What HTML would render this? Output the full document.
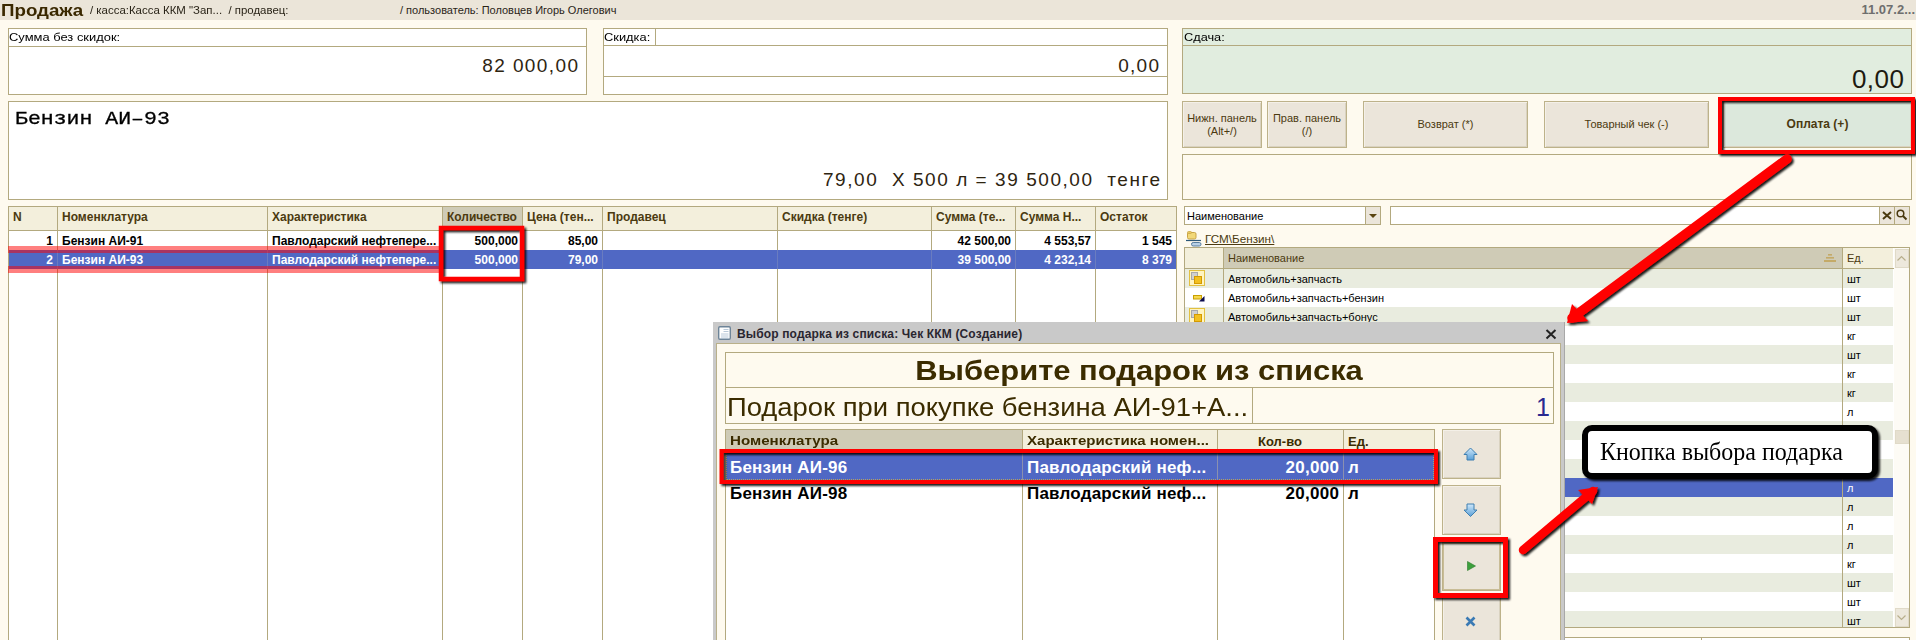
<!DOCTYPE html><html><head><meta charset="utf-8"><style>
*{margin:0;padding:0}
html,body{width:1916px;height:640px;overflow:hidden;background:#fefaef;position:relative}
.a{position:absolute;box-sizing:border-box}
.t{white-space:pre;box-sizing:content-box}
.btn{border:1px solid #bdb28a;box-shadow:inset 1px 1px 0 #f4f0e8,inset -1px -1px 0 #d9d2c0;display:flex;align-items:center;justify-content:center}
.bl{font-family:"Liberation Sans",sans-serif;text-align:center;line-height:13px}
</style></head><body><div class="a" style="left:0px;top:0px;width:1916px;height:20px;background:#ebe5d9;"></div>
<div class="a t" style="top:-0.05px;font-family:'Liberation Sans', sans-serif;font-size:16px;font-weight:700;color:#3a2800;line-height:21px;left:1px;transform:scale(1.17,1);transform-origin:0 16.05px;">Продажа</div>
<div class="a t" style="top:3.19px;font-family:'Liberation Sans', sans-serif;font-size:11px;font-weight:400;color:#2a2418;line-height:14px;left:90px;transform:scale(1.04,1);transform-origin:0 10.81px;">/ касса:Касса ККМ "Зап... &nbsp;/ продавец:</div>
<div class="a t" style="top:3.19px;font-family:'Liberation Sans', sans-serif;font-size:11px;font-weight:400;color:#2a2418;line-height:14px;left:400px;">/ пользователь: Половцев Игорь Олегович</div>
<div class="a t" style="top:0.99px;font-family:'Liberation Sans', sans-serif;font-size:13px;font-weight:700;color:#6e6e6e;line-height:17px;right:1px;">11.07.2...</div>
<div class="a" style="left:8px;top:28px;width:579px;height:67px;border:1px solid #b3a97f;background:#fff;"></div>
<div class="a" style="left:8px;top:46px;width:579px;height:1px;background:#b3a97f;"></div>
<div class="a t" style="top:30.19px;font-family:'Liberation Sans', sans-serif;font-size:11px;font-weight:400;color:#000;line-height:14px;left:9px;transform:scale(1.175,1);transform-origin:0 10.81px;">Сумма без скидок:</div>
<div class="a t" style="top:52.91px;font-family:'Liberation Sans', sans-serif;font-size:19px;font-weight:400;color:#2e2410;line-height:25px;letter-spacing:1.4px;right:1336.6px;">82 000,00</div>
<div class="a" style="left:603px;top:28px;width:565px;height:67px;border:1px solid #b3a97f;background:#fff;"></div>
<div class="a" style="left:603px;top:45px;width:565px;height:1px;background:#b3a97f;"></div>
<div class="a" style="left:603px;top:76px;width:565px;height:1px;background:#b3a97f;"></div>
<div class="a" style="left:655px;top:28px;width:1px;height:18px;background:#b3a97f;"></div>
<div class="a t" style="top:30.19px;font-family:'Liberation Sans', sans-serif;font-size:11px;font-weight:400;color:#000;line-height:14px;left:603.5px;transform:scale(1.17,1);transform-origin:0 10.81px;">Скидка:</div>
<div class="a t" style="top:52.91px;font-family:'Liberation Sans', sans-serif;font-size:19px;font-weight:400;color:#2e2410;line-height:25px;letter-spacing:1.3px;right:755.7px;">0,00</div>
<div class="a" style="left:1182px;top:28px;width:730px;height:66px;border:1px solid #b3a97f;background:#e1eddf;"></div>
<div class="a" style="left:1182px;top:45px;width:730px;height:1px;background:#b3a97f;"></div>
<div class="a t" style="top:30.19px;font-family:'Liberation Sans', sans-serif;font-size:11px;font-weight:400;color:#000;line-height:14px;left:1184px;transform:scale(1.16,1);transform-origin:0 10.81px;">Сдача:</div>
<div class="a t" style="top:61.99px;font-family:'Liberation Sans', sans-serif;font-size:26px;font-weight:400;color:#1e1a10;line-height:34px;letter-spacing:0.5px;right:11.5px;">0,00</div>
<div class="a" style="left:8px;top:101px;width:1160px;height:99px;border:1px solid #b3a97f;background:#fff;"></div>
<div class="a t" style="top:104.28px;font-family:'Liberation Mono', monospace;font-size:21.5px;font-weight:400;color:#000;line-height:28px;left:15px;transform:scale(1,0.85);transform-origin:0 19.72px;-webkit-text-stroke:0.35px #000;">Бензин АИ–93</div>
<div class="a t" style="top:167.41px;font-family:'Liberation Sans', sans-serif;font-size:19px;font-weight:400;color:#2e2410;line-height:25px;letter-spacing:1.55px;right:754.4000000000001px;">79,00 &nbsp;X 500 л = 39 500,00 &nbsp;тенге</div>
<div class="a btn" style="left:1182px;top:101px;width:80px;height:47px;background:#ebe5da;"><div class="bl" style="font-weight:400;font-size:11px;color:#4b3a10">Нижн. панель<br>(Alt+/)</div></div>
<div class="a btn" style="left:1267px;top:101px;width:80px;height:47px;background:#ebe5da;"><div class="bl" style="font-weight:400;font-size:11px;color:#4b3a10">Прав. панель<br>(/)</div></div>
<div class="a btn" style="left:1363px;top:101px;width:165px;height:47px;background:#ebe5da;"><div class="bl" style="font-weight:400;font-size:11px;color:#4b3a10">Возврат (*)</div></div>
<div class="a btn" style="left:1544px;top:101px;width:165px;height:47px;background:#ebe5da;"><div class="bl" style="font-weight:400;font-size:11px;color:#4b3a10">Товарный чек (-)</div></div>
<div class="a btn" style="left:1723px;top:101px;width:189px;height:47px;background:#dce8dc;"><div class="bl" style="font-weight:700;font-size:12px;color:#4b3a10">Оплата (+)</div></div>
<div class="a" style="left:1182px;top:154px;width:730px;height:46px;border:1px solid #b3a97f;background:#fefaef;"></div>
<div class="a" style="left:8px;top:206px;width:1169px;height:455px;border:1px solid #b3a97f;background:#fff;"></div>
<div class="a" style="left:9px;top:207px;width:1167px;height:24px;background:#f3efdc;"></div>
<div class="a" style="left:443px;top:207px;width:79px;height:23px;background:#cfcbb6;"></div>
<div class="a" style="left:8px;top:230px;width:1169px;height:1px;background:#b3a97f;"></div>
<div class="a" style="left:57px;top:206px;width:1px;height:435px;background:#b3a97f;"></div>
<div class="a" style="left:267px;top:206px;width:1px;height:435px;background:#b3a97f;"></div>
<div class="a" style="left:442px;top:206px;width:1px;height:435px;background:#b3a97f;"></div>
<div class="a" style="left:522px;top:206px;width:1px;height:435px;background:#b3a97f;"></div>
<div class="a" style="left:602px;top:206px;width:1px;height:435px;background:#b3a97f;"></div>
<div class="a" style="left:777px;top:206px;width:1px;height:435px;background:#b3a97f;"></div>
<div class="a" style="left:931px;top:206px;width:1px;height:435px;background:#b3a97f;"></div>
<div class="a" style="left:1015px;top:206px;width:1px;height:435px;background:#b3a97f;"></div>
<div class="a" style="left:1095px;top:206px;width:1px;height:435px;background:#b3a97f;"></div>
<div class="a t" style="top:208.84px;font-family:'Liberation Sans', sans-serif;font-size:12px;font-weight:700;color:#4b3a10;line-height:16px;left:13px;">N</div>
<div class="a t" style="top:208.84px;font-family:'Liberation Sans', sans-serif;font-size:12px;font-weight:700;color:#4b3a10;line-height:16px;left:62px;">Номенклатура</div>
<div class="a t" style="top:208.84px;font-family:'Liberation Sans', sans-serif;font-size:12px;font-weight:700;color:#4b3a10;line-height:16px;left:272px;">Характеристика</div>
<div class="a t" style="top:208.84px;font-family:'Liberation Sans', sans-serif;font-size:12px;font-weight:700;color:#4b3a10;line-height:16px;left:447px;">Количество</div>
<div class="a t" style="top:208.84px;font-family:'Liberation Sans', sans-serif;font-size:12px;font-weight:700;color:#4b3a10;line-height:16px;left:527px;">Цена (тен...</div>
<div class="a t" style="top:208.84px;font-family:'Liberation Sans', sans-serif;font-size:12px;font-weight:700;color:#4b3a10;line-height:16px;left:607px;">Продавец</div>
<div class="a t" style="top:208.84px;font-family:'Liberation Sans', sans-serif;font-size:12px;font-weight:700;color:#4b3a10;line-height:16px;left:782px;">Скидка (тенге)</div>
<div class="a t" style="top:208.84px;font-family:'Liberation Sans', sans-serif;font-size:12px;font-weight:700;color:#4b3a10;line-height:16px;left:936px;">Сумма (те...</div>
<div class="a t" style="top:208.84px;font-family:'Liberation Sans', sans-serif;font-size:12px;font-weight:700;color:#4b3a10;line-height:16px;left:1020px;">Сумма Н...</div>
<div class="a t" style="top:208.84px;font-family:'Liberation Sans', sans-serif;font-size:12px;font-weight:700;color:#4b3a10;line-height:16px;left:1100px;">Остаток</div>
<div class="a" style="left:9px;top:250px;width:1167px;height:19px;background:#5068c4;"></div>
<div class="a" style="left:57px;top:250px;width:1px;height:19px;background:#6a7cc0;"></div>
<div class="a" style="left:267px;top:250px;width:1px;height:19px;background:#6a7cc0;"></div>
<div class="a" style="left:442px;top:250px;width:1px;height:19px;background:#6a7cc0;"></div>
<div class="a" style="left:522px;top:250px;width:1px;height:19px;background:#6a7cc0;"></div>
<div class="a" style="left:602px;top:250px;width:1px;height:19px;background:#6a7cc0;"></div>
<div class="a" style="left:777px;top:250px;width:1px;height:19px;background:#6a7cc0;"></div>
<div class="a" style="left:931px;top:250px;width:1px;height:19px;background:#6a7cc0;"></div>
<div class="a" style="left:1015px;top:250px;width:1px;height:19px;background:#6a7cc0;"></div>
<div class="a" style="left:1095px;top:250px;width:1px;height:19px;background:#6a7cc0;"></div>
<div class="a t" style="top:232.84px;font-family:'Liberation Sans', sans-serif;font-size:12px;font-weight:700;color:#000;line-height:16px;right:1863px;">1</div>
<div class="a t" style="top:232.84px;font-family:'Liberation Sans', sans-serif;font-size:12px;font-weight:700;color:#000;line-height:16px;left:62px;">Бензин АИ-91</div>
<div class="a t" style="top:232.84px;font-family:'Liberation Sans', sans-serif;font-size:12px;font-weight:700;color:#000;line-height:16px;left:272px;">Павлодарский нефтепере...</div>
<div class="a t" style="top:232.84px;font-family:'Liberation Sans', sans-serif;font-size:12px;font-weight:700;color:#000;line-height:16px;right:1398px;">500,000</div>
<div class="a t" style="top:232.84px;font-family:'Liberation Sans', sans-serif;font-size:12px;font-weight:700;color:#000;line-height:16px;right:1318px;">85,00</div>
<div class="a t" style="top:232.84px;font-family:'Liberation Sans', sans-serif;font-size:12px;font-weight:700;color:#000;line-height:16px;right:905px;">42 500,00</div>
<div class="a t" style="top:232.84px;font-family:'Liberation Sans', sans-serif;font-size:12px;font-weight:700;color:#000;line-height:16px;right:825px;">4 553,57</div>
<div class="a t" style="top:232.84px;font-family:'Liberation Sans', sans-serif;font-size:12px;font-weight:700;color:#000;line-height:16px;right:744px;">1 545</div>
<div class="a t" style="top:251.84px;font-family:'Liberation Sans', sans-serif;font-size:12px;font-weight:700;color:#fff;line-height:16px;right:1863px;">2</div>
<div class="a t" style="top:251.84px;font-family:'Liberation Sans', sans-serif;font-size:12px;font-weight:700;color:#fff;line-height:16px;left:62px;">Бензин АИ-93</div>
<div class="a t" style="top:251.84px;font-family:'Liberation Sans', sans-serif;font-size:12px;font-weight:700;color:#fff;line-height:16px;left:272px;">Павлодарский нефтепере...</div>
<div class="a t" style="top:251.84px;font-family:'Liberation Sans', sans-serif;font-size:12px;font-weight:700;color:#fff;line-height:16px;right:1398px;">500,000</div>
<div class="a t" style="top:251.84px;font-family:'Liberation Sans', sans-serif;font-size:12px;font-weight:700;color:#fff;line-height:16px;right:1318px;">79,00</div>
<div class="a t" style="top:251.84px;font-family:'Liberation Sans', sans-serif;font-size:12px;font-weight:700;color:#fff;line-height:16px;right:905px;">39 500,00</div>
<div class="a t" style="top:251.84px;font-family:'Liberation Sans', sans-serif;font-size:12px;font-weight:700;color:#fff;line-height:16px;right:825px;">4 232,14</div>
<div class="a t" style="top:251.84px;font-family:'Liberation Sans', sans-serif;font-size:12px;font-weight:700;color:#fff;line-height:16px;right:744px;">8 379</div>
<div class="a" style="left:1184px;top:206px;width:197px;height:19px;border:1px solid #b3a97f;background:#fff;"></div>
<div class="a" style="left:1366px;top:207px;width:14px;height:17px;background:#ebe5da;"></div>
<div class="a" style="left:1365px;top:206px;width:1px;height:19px;background:#b3a97f;"></div>
<div class="a t" style="top:209.19px;font-family:'Liberation Sans', sans-serif;font-size:11px;font-weight:400;color:#000;line-height:14px;left:1187px;">Наименование</div>
<div class="a" style="left:1369px;top:214px;width:0;height:0;border-left:4px solid transparent;border-right:4px solid transparent;border-top:4.5px solid #5a4410"></div>
<div class="a" style="left:1390px;top:206px;width:520px;height:19px;border:1px solid #b3a97f;background:#fff;"></div>
<div class="a" style="left:1880px;top:207px;width:29px;height:17px;background:#ebe5da;"></div>
<div class="a" style="left:1879px;top:206px;width:1px;height:19px;background:#b3a97f;"></div>
<div class="a" style="left:1894px;top:206px;width:1px;height:19px;background:#b3a97f;"></div>
<svg class="a" style="left:0;top:0" width="1916" height="640"><path d="M1883,212 L1891,219 M1891,212 L1883,219" stroke="#4a3a10" stroke-width="2"/></svg>
<div class="a t" style="top:231.44px;font-family:'Liberation Sans', sans-serif;font-size:11.7px;font-weight:400;color:#4b3a10;line-height:15px;left:1205px;"><u>ГСМ\Бензин\</u></div>
<div class="a" style="left:1184px;top:247px;width:726px;height:381px;border:1px solid #b3a97f;background:#fff;"></div>
<div class="a" style="left:1185px;top:248px;width:38px;height:20px;background:#f3efdc;"></div>
<div class="a" style="left:1224px;top:248px;width:618px;height:20px;background:#cfcbb6;"></div>
<div class="a" style="left:1843px;top:248px;width:50px;height:20px;background:#f3efdc;"></div>
<div class="a" style="left:1184px;top:268px;width:710px;height:1px;background:#b3a97f;"></div>
<div class="a" style="left:1223px;top:247px;width:1px;height:381px;background:#b3a97f;"></div>
<div class="a" style="left:1842px;top:247px;width:1px;height:381px;background:#b3a97f;"></div>
<div class="a t" style="top:251.19px;font-family:'Liberation Sans', sans-serif;font-size:11px;font-weight:400;color:#4b3a10;line-height:14px;left:1228px;">Наименование</div>
<div class="a t" style="top:251.19px;font-family:'Liberation Sans', sans-serif;font-size:11px;font-weight:400;color:#4b3a10;line-height:14px;left:1847px;">Ед.</div>
<div class="a" style="left:1185px;top:269px;width:38px;height:19px;background:#e9ecdf;"></div>
<div class="a" style="left:1224px;top:269px;width:618px;height:19px;background:#e9ecdf;"></div>
<div class="a" style="left:1843px;top:269px;width:50px;height:19px;background:#e9ecdf;"></div>
<div class="a t" style="top:272.19px;font-family:'Liberation Sans', sans-serif;font-size:11px;font-weight:400;color:#000;line-height:14px;left:1847px;">шт</div>
<div class="a t" style="top:272.19px;font-family:'Liberation Sans', sans-serif;font-size:11px;font-weight:400;color:#000;line-height:14px;left:1228px;">Автомобиль+запчасть</div>
<div class="a" style="left:1185px;top:288px;width:38px;height:19px;background:#fff;"></div>
<div class="a" style="left:1224px;top:288px;width:618px;height:19px;background:#fff;"></div>
<div class="a" style="left:1843px;top:288px;width:50px;height:19px;background:#fff;"></div>
<div class="a t" style="top:291.19px;font-family:'Liberation Sans', sans-serif;font-size:11px;font-weight:400;color:#000;line-height:14px;left:1847px;">шт</div>
<div class="a t" style="top:291.19px;font-family:'Liberation Sans', sans-serif;font-size:11px;font-weight:400;color:#000;line-height:14px;left:1228px;">Автомобиль+запчасть+бензин</div>
<div class="a" style="left:1185px;top:307px;width:38px;height:19px;background:#e9ecdf;"></div>
<div class="a" style="left:1224px;top:307px;width:618px;height:19px;background:#e9ecdf;"></div>
<div class="a" style="left:1843px;top:307px;width:50px;height:19px;background:#e9ecdf;"></div>
<div class="a t" style="top:310.19px;font-family:'Liberation Sans', sans-serif;font-size:11px;font-weight:400;color:#000;line-height:14px;left:1847px;">шт</div>
<div class="a t" style="top:310.19px;font-family:'Liberation Sans', sans-serif;font-size:11px;font-weight:400;color:#000;line-height:14px;left:1228px;">Автомобиль+запчасть+бонус</div>
<div class="a" style="left:1185px;top:326px;width:38px;height:19px;background:#fff;"></div>
<div class="a" style="left:1224px;top:326px;width:618px;height:19px;background:#fff;"></div>
<div class="a" style="left:1843px;top:326px;width:50px;height:19px;background:#fff;"></div>
<div class="a t" style="top:329.19px;font-family:'Liberation Sans', sans-serif;font-size:11px;font-weight:400;color:#000;line-height:14px;left:1847px;">кг</div>
<div class="a" style="left:1185px;top:345px;width:38px;height:19px;background:#e9ecdf;"></div>
<div class="a" style="left:1224px;top:345px;width:618px;height:19px;background:#e9ecdf;"></div>
<div class="a" style="left:1843px;top:345px;width:50px;height:19px;background:#e9ecdf;"></div>
<div class="a t" style="top:348.19px;font-family:'Liberation Sans', sans-serif;font-size:11px;font-weight:400;color:#000;line-height:14px;left:1847px;">шт</div>
<div class="a" style="left:1185px;top:364px;width:38px;height:19px;background:#fff;"></div>
<div class="a" style="left:1224px;top:364px;width:618px;height:19px;background:#fff;"></div>
<div class="a" style="left:1843px;top:364px;width:50px;height:19px;background:#fff;"></div>
<div class="a t" style="top:367.19px;font-family:'Liberation Sans', sans-serif;font-size:11px;font-weight:400;color:#000;line-height:14px;left:1847px;">кг</div>
<div class="a" style="left:1185px;top:383px;width:38px;height:19px;background:#e9ecdf;"></div>
<div class="a" style="left:1224px;top:383px;width:618px;height:19px;background:#e9ecdf;"></div>
<div class="a" style="left:1843px;top:383px;width:50px;height:19px;background:#e9ecdf;"></div>
<div class="a t" style="top:386.19px;font-family:'Liberation Sans', sans-serif;font-size:11px;font-weight:400;color:#000;line-height:14px;left:1847px;">кг</div>
<div class="a" style="left:1185px;top:402px;width:38px;height:19px;background:#fff;"></div>
<div class="a" style="left:1224px;top:402px;width:618px;height:19px;background:#fff;"></div>
<div class="a" style="left:1843px;top:402px;width:50px;height:19px;background:#fff;"></div>
<div class="a t" style="top:405.19px;font-family:'Liberation Sans', sans-serif;font-size:11px;font-weight:400;color:#000;line-height:14px;left:1847px;">л</div>
<div class="a" style="left:1185px;top:421px;width:38px;height:19px;background:#e9ecdf;"></div>
<div class="a" style="left:1224px;top:421px;width:618px;height:19px;background:#e9ecdf;"></div>
<div class="a" style="left:1843px;top:421px;width:50px;height:19px;background:#e9ecdf;"></div>
<div class="a t" style="top:424.19px;font-family:'Liberation Sans', sans-serif;font-size:11px;font-weight:400;color:#000;line-height:14px;left:1847px;">л</div>
<div class="a" style="left:1185px;top:440px;width:38px;height:19px;background:#fff;"></div>
<div class="a" style="left:1224px;top:440px;width:618px;height:19px;background:#fff;"></div>
<div class="a" style="left:1843px;top:440px;width:50px;height:19px;background:#fff;"></div>
<div class="a t" style="top:443.19px;font-family:'Liberation Sans', sans-serif;font-size:11px;font-weight:400;color:#000;line-height:14px;left:1847px;">л</div>
<div class="a" style="left:1185px;top:459px;width:38px;height:19px;background:#e9ecdf;"></div>
<div class="a" style="left:1224px;top:459px;width:618px;height:19px;background:#e9ecdf;"></div>
<div class="a" style="left:1843px;top:459px;width:50px;height:19px;background:#e9ecdf;"></div>
<div class="a t" style="top:462.19px;font-family:'Liberation Sans', sans-serif;font-size:11px;font-weight:400;color:#000;line-height:14px;left:1847px;">л</div>
<div class="a" style="left:1185px;top:478px;width:38px;height:19px;background:#5068c4;"></div>
<div class="a" style="left:1224px;top:478px;width:618px;height:19px;background:#5068c4;"></div>
<div class="a" style="left:1843px;top:478px;width:50px;height:19px;background:#5068c4;"></div>
<div class="a t" style="top:481.19px;font-family:'Liberation Sans', sans-serif;font-size:11px;font-weight:400;color:#fff;line-height:14px;left:1847px;">л</div>
<div class="a" style="left:1185px;top:497px;width:38px;height:19px;background:#e9ecdf;"></div>
<div class="a" style="left:1224px;top:497px;width:618px;height:19px;background:#e9ecdf;"></div>
<div class="a" style="left:1843px;top:497px;width:50px;height:19px;background:#e9ecdf;"></div>
<div class="a t" style="top:500.19px;font-family:'Liberation Sans', sans-serif;font-size:11px;font-weight:400;color:#000;line-height:14px;left:1847px;">л</div>
<div class="a" style="left:1185px;top:516px;width:38px;height:19px;background:#fff;"></div>
<div class="a" style="left:1224px;top:516px;width:618px;height:19px;background:#fff;"></div>
<div class="a" style="left:1843px;top:516px;width:50px;height:19px;background:#fff;"></div>
<div class="a t" style="top:519.19px;font-family:'Liberation Sans', sans-serif;font-size:11px;font-weight:400;color:#000;line-height:14px;left:1847px;">л</div>
<div class="a" style="left:1185px;top:535px;width:38px;height:19px;background:#e9ecdf;"></div>
<div class="a" style="left:1224px;top:535px;width:618px;height:19px;background:#e9ecdf;"></div>
<div class="a" style="left:1843px;top:535px;width:50px;height:19px;background:#e9ecdf;"></div>
<div class="a t" style="top:538.19px;font-family:'Liberation Sans', sans-serif;font-size:11px;font-weight:400;color:#000;line-height:14px;left:1847px;">л</div>
<div class="a" style="left:1185px;top:554px;width:38px;height:19px;background:#fff;"></div>
<div class="a" style="left:1224px;top:554px;width:618px;height:19px;background:#fff;"></div>
<div class="a" style="left:1843px;top:554px;width:50px;height:19px;background:#fff;"></div>
<div class="a t" style="top:557.19px;font-family:'Liberation Sans', sans-serif;font-size:11px;font-weight:400;color:#000;line-height:14px;left:1847px;">кг</div>
<div class="a" style="left:1185px;top:573px;width:38px;height:19px;background:#e9ecdf;"></div>
<div class="a" style="left:1224px;top:573px;width:618px;height:19px;background:#e9ecdf;"></div>
<div class="a" style="left:1843px;top:573px;width:50px;height:19px;background:#e9ecdf;"></div>
<div class="a t" style="top:576.19px;font-family:'Liberation Sans', sans-serif;font-size:11px;font-weight:400;color:#000;line-height:14px;left:1847px;">шт</div>
<div class="a" style="left:1185px;top:592px;width:38px;height:19px;background:#fff;"></div>
<div class="a" style="left:1224px;top:592px;width:618px;height:19px;background:#fff;"></div>
<div class="a" style="left:1843px;top:592px;width:50px;height:19px;background:#fff;"></div>
<div class="a t" style="top:595.19px;font-family:'Liberation Sans', sans-serif;font-size:11px;font-weight:400;color:#000;line-height:14px;left:1847px;">шт</div>
<div class="a" style="left:1185px;top:611px;width:38px;height:16px;background:#e9ecdf;"></div>
<div class="a" style="left:1224px;top:611px;width:618px;height:16px;background:#e9ecdf;"></div>
<div class="a" style="left:1843px;top:611px;width:50px;height:16px;background:#e9ecdf;"></div>
<div class="a t" style="top:614.19px;font-family:'Liberation Sans', sans-serif;font-size:11px;font-weight:400;color:#000;line-height:14px;left:1847px;">шт</div>
<div class="a" style="left:1894px;top:248px;width:15px;height:379px;background:#fdfbf5;"></div>
<div class="a" style="left:1895px;top:249px;width:14px;height:19px;border:1px solid #e0dac8;background:#ede8dc;"></div>
<div class="a" style="left:1895px;top:430px;width:14px;height:14px;border:1px solid #e0dac8;background:#e6e0d0;"></div>
<div class="a" style="left:1895px;top:608px;width:14px;height:19px;border:1px solid #e0dac8;background:#ede8dc;"></div>
<div class="a" style="left:1184px;top:637px;width:726px;height:24px;border:1px solid #b3a97f;background:#fff;"></div>
<div class="a" style="left:1701px;top:637px;width:1px;height:4px;background:#b3a97f;"></div>
<svg class="a" style="left:0;top:0" width="1916" height="640">
<rect x="1187.5" y="232.5" width="8.5" height="6.5" rx="1.5" fill="#f2d878" stroke="#c9a446"/>
<rect x="1187.5" y="231.5" width="4" height="2" rx="1" fill="#e8c860" stroke="#c9a446" stroke-width="0.8"/>
<line x1="1186" y1="240.5" x2="1201" y2="240.5" stroke="#2d5878" stroke-width="1.2"/>
<rect x="1191.5" y="242.5" width="9.5" height="3.5" rx="1.7" fill="#b8d0e6" stroke="#587c9c"/>
<rect x="1189.5" y="270.5" width="15" height="15" fill="#fff4c0" stroke="#e2c040"/>
<rect x="1191.5" y="272.5" width="6" height="7" fill="#d0d0d0" stroke="#a8a8a8"/>
<rect x="1194.5" y="276.5" width="7" height="7" fill="#f2c020" stroke="#d49a00"/>
<rect x="1193.5" y="295.5" width="8" height="3.5" fill="#f6d850" stroke="#c8a000"/>
<polygon points="1204.5,296 1204.5,301.5 1199,301.5" fill="#0c0c50"/>
<rect x="1189.5" y="308.5" width="15" height="15" fill="#fff4c0" stroke="#e2c040"/>
<rect x="1191.5" y="310.5" width="6" height="7" fill="#d0d0d0" stroke="#a8a8a8"/>
<rect x="1194.5" y="314.5" width="7" height="7" fill="#f2c020" stroke="#d49a00"/>
<rect x="1828" y="254" width="4" height="1.6" fill="#c4aa68"/>
<rect x="1826" y="257" width="8" height="1.6" fill="#c4aa68"/>
<rect x="1824" y="260" width="12" height="2" fill="#c4aa68"/>
<circle cx="1900.5" cy="213.5" r="3.3" fill="none" stroke="#4a3a10" stroke-width="1.5"/>
<line x1="1903" y1="216" x2="1906.5" y2="219.5" stroke="#4a3a10" stroke-width="2"/>
<polyline points="1897.5,260.5 1901.5,256.5 1905.5,260.5" fill="none" stroke="#b8ae8c" stroke-width="1.2"/>
<polyline points="1897.5,615.5 1901.5,619.5 1905.5,615.5" fill="none" stroke="#b8ae8c" stroke-width="1.2"/>
</svg>
<div class="a" style="left:713px;top:322px;width:852px;height:318px;background:#c9c9c9;"></div>
<div class="a" style="left:1564px;top:322px;width:1px;height:318px;background:#a8a8a8;"></div>
<div class="a" style="left:716px;top:343px;width:845px;height:297px;background:#fefaef;"></div>
<div class="a" style="left:716px;top:343px;width:845px;height:1px;background:#b9b08a;"></div>
<div class="a" style="left:1560px;top:343px;width:1px;height:297px;background:#b9b08a;"></div>
<div class="a" style="left:716px;top:343px;width:1px;height:298px;background:#b9b08a;"></div>
<div class="a t" style="top:325.84px;font-family:'Liberation Sans', sans-serif;font-size:12px;font-weight:700;color:#2a2630;line-height:16px;letter-spacing:0.15px;left:737px;">Выбор подарка из списка: Чек ККМ (Создание)</div>
<svg class="a" style="left:0;top:0" width="1916" height="640"><rect x="718.7" y="326.7" width="11.6" height="12.6" rx="1.2" fill="#fff" stroke="#6d8498" stroke-width="1.4"/>
<path d="M723.5,329.5 h5 M723.5,331.5 h5 M721,334 h7.5 M721,336 h7.5 M721,338 h7.5" stroke="#a8bcd0" stroke-width="0.8"/></svg>
<svg class="a" style="left:0;top:0" width="1916" height="640"><path d="M1546.5,330 L1555.5,338.5 M1555.5,330 L1546.5,338.5" stroke="#222" stroke-width="2"/></svg>
<div class="a" style="left:725px;top:352px;width:829px;height:72px;border:1px solid #b3a97f;background:#fefaef;"></div>
<div class="a" style="left:725px;top:387px;width:829px;height:1px;background:#b3a97f;"></div>
<div class="a" style="left:1252px;top:387px;width:1px;height:37px;background:#b3a97f;"></div>
<div class="a t" style="top:353.29px;font-family:'Liberation Sans', sans-serif;font-size:28px;font-weight:700;color:#3b2c00;line-height:36px;left:139px;width:2000px;text-align:center;transform:scale(1.105,1);transform-origin:50% 27.71px;">Выберите подарок из списка</div>
<div class="a t" style="top:390.66px;font-family:'Liberation Sans', sans-serif;font-size:25.5px;font-weight:400;color:#3b2c00;line-height:33px;left:727px;transform:scale(1.075,1);transform-origin:0 25.34px;">Подарок при покупке бензина АИ-91+А...</div>
<div class="a t" style="top:391.33px;font-family:'Liberation Sans', sans-serif;font-size:25px;font-weight:400;color:#2a2a90;line-height:32px;right:366px;">1</div>
<div class="a" style="left:725px;top:429px;width:710px;height:232px;border:1px solid #b3a97f;background:#fff;"></div>
<div class="a" style="left:726px;top:430px;width:296px;height:21px;background:#cfcbb6;"></div>
<div class="a" style="left:1023px;top:430px;width:411px;height:21px;background:#f3efdc;"></div>
<div class="a" style="left:725px;top:451px;width:710px;height:1px;background:#b3a97f;"></div>
<div class="a" style="left:1022px;top:429px;width:1px;height:212px;background:#b3a97f;"></div>
<div class="a" style="left:1217px;top:429px;width:1px;height:212px;background:#b3a97f;"></div>
<div class="a" style="left:1343px;top:429px;width:1px;height:212px;background:#b3a97f;"></div>
<div class="a t" style="top:432.32px;font-family:'Liberation Sans', sans-serif;font-size:13.5px;font-weight:700;color:#3b2c00;line-height:18px;left:730px;transform:scale(1.12,1);transform-origin:0 13.68px;">Номенклатура</div>
<div class="a t" style="top:432.32px;font-family:'Liberation Sans', sans-serif;font-size:13.5px;font-weight:700;color:#3b2c00;line-height:18px;left:1027px;transform:scale(1.115,1);transform-origin:0 13.68px;">Характеристика номен...</div>
<div class="a t" style="top:432.99px;font-family:'Liberation Sans', sans-serif;font-size:13px;font-weight:700;color:#3b2c00;line-height:17px;left:280px;width:2000px;text-align:center;">Кол-во</div>
<div class="a t" style="top:432.99px;font-family:'Liberation Sans', sans-serif;font-size:13px;font-weight:700;color:#3b2c00;line-height:17px;left:1348px;">Ед.</div>
<div class="a" style="left:726px;top:452px;width:708px;height:28px;background:#5068c4;"></div>
<div class="a" style="left:726px;top:452px;width:708px;height:28px;border:1px dotted #b8a060"></div>
<div class="a" style="left:1022px;top:452px;width:1px;height:28px;background:#8a90b0;"></div>
<div class="a" style="left:1217px;top:452px;width:1px;height:28px;background:#8a90b0;"></div>
<div class="a" style="left:1343px;top:452px;width:1px;height:28px;background:#8a90b0;"></div>
<div class="a t" style="top:457.11px;font-family:'Liberation Sans', sans-serif;font-size:17px;font-weight:700;color:#fff;line-height:22px;letter-spacing:0.2px;left:730px;">Бензин АИ-96</div>
<div class="a t" style="top:457.11px;font-family:'Liberation Sans', sans-serif;font-size:17px;font-weight:700;color:#fff;line-height:22px;letter-spacing:0.2px;left:1027px;">Павлодарский неф...</div>
<div class="a t" style="top:457.11px;font-family:'Liberation Sans', sans-serif;font-size:17px;font-weight:700;color:#fff;line-height:22px;letter-spacing:0.3px;right:576.7px;">20,000</div>
<div class="a t" style="top:457.11px;font-family:'Liberation Sans', sans-serif;font-size:17px;font-weight:700;color:#fff;line-height:22px;left:1348px;">л</div>
<div class="a t" style="top:483.11px;font-family:'Liberation Sans', sans-serif;font-size:17px;font-weight:700;color:#000;line-height:22px;letter-spacing:0.2px;left:730px;">Бензин АИ-98</div>
<div class="a t" style="top:483.11px;font-family:'Liberation Sans', sans-serif;font-size:17px;font-weight:700;color:#000;line-height:22px;letter-spacing:0.2px;left:1027px;">Павлодарский неф...</div>
<div class="a t" style="top:483.11px;font-family:'Liberation Sans', sans-serif;font-size:17px;font-weight:700;color:#000;line-height:22px;letter-spacing:0.3px;right:576.7px;">20,000</div>
<div class="a t" style="top:483.11px;font-family:'Liberation Sans', sans-serif;font-size:17px;font-weight:700;color:#000;line-height:22px;left:1348px;">л</div>
<div class="a btn" style="left:1442px;top:429px;width:59px;height:50px;background:#ebe5da;"><div class="bl" style="font-weight:400;font-size:11px;color:#4b3a10"></div></div>
<div class="a btn" style="left:1442px;top:485px;width:59px;height:50px;background:#ebe5da;"><div class="bl" style="font-weight:400;font-size:11px;color:#4b3a10"></div></div>
<div class="a btn" style="left:1442px;top:542px;width:59px;height:49px;background:#ebe5da;"><div class="bl" style="font-weight:400;font-size:11px;color:#4b3a10"></div></div>
<div class="a btn" style="left:1442px;top:597px;width:59px;height:50px;background:#ebe5da;"><div class="bl" style="font-weight:400;font-size:11px;color:#4b3a10"></div></div>
<div class="a" style="left:1443px;top:543px;width:57px;height:47px;border:1px solid #c8bc96"></div>
<svg class="a" style="left:0;top:0" width="1916" height="640"><defs><linearGradient id="ag" x1="0" y1="0" x2="0" y2="1"><stop offset="0" stop-color="#cfe8fa"/><stop offset="1" stop-color="#5aa0d8"/></linearGradient></defs>
<polygon points="1470.5,448 1477,454.5 1474,454.5 1474,460 1467,460 1467,454.5 1464,454.5" fill="url(#ag)" stroke="#3f7fb0" stroke-width="1"/>
<polygon points="1470.5,516.5 1477,510 1474,510 1474,504 1467,504 1467,510 1464,510" fill="url(#ag)" stroke="#3f7fb0" stroke-width="1"/>
<polygon points="1467.5,561.5 1475.5,566 1467.5,570.5" fill="#3ca03c" stroke="#2a7a2a" stroke-width="0.6"/>
<path d="M1466.5,617.5 L1474.5,625.5 M1474.5,617.5 L1466.5,625.5" stroke="#3a7ab4" stroke-width="2.6"/></svg>
<svg class="a" style="left:0;top:0" width="1916" height="640">
<defs><filter id="sh" x="-20%" y="-20%" width="140%" height="140%"><feGaussianBlur in="SourceAlpha" stdDeviation="1.2"/><feOffset dx="2" dy="2"/><feComponentTransfer><feFuncA type="linear" slope="0.9"/></feComponentTransfer><feMerge><feMergeNode/><feMergeNode in="SourceGraphic"/></feMerge></filter></defs>
<rect x="8" y="246" width="431" height="7" fill="rgba(255,0,0,0.5)"/><rect x="8" y="266" width="431" height="7" fill="rgba(255,0,0,0.5)"/>
<g filter="url(#sh)">
<rect x="441" y="228" width="81" height="51" fill="none" stroke="#ff0000" stroke-width="4.5"/>
<rect x="1720" y="99" width="193" height="53" fill="none" stroke="#ff0000" stroke-width="4"/>
<rect x="721.5" y="451" width="714.5" height="31" fill="none" stroke="#ff0000" stroke-width="4"/>
<rect x="1435.5" y="539.5" width="70" height="56" fill="none" stroke="#ff0000" stroke-width="5"/>
<line x1="1787" y1="159" x2="1572" y2="318" stroke="#ff0000" stroke-width="9.5" stroke-linecap="round"/>
<polygon points="1567,323 1572,304 1588,321" fill="#ff0000"/>
<line x1="1523" y1="550" x2="1593" y2="491" stroke="#ff0000" stroke-width="8.5" stroke-linecap="round"/>
<polygon points="1598,487 1578,490 1592,504" fill="#ff0000"/>
<rect x="1585" y="428" width="290" height="48" rx="7" fill="#fff" stroke="#000" stroke-width="6"/>
</g>
</svg>
<div class="a t" style="top:437.40px;font-family:'Liberation Serif', serif;font-size:24px;font-weight:400;color:#000;line-height:31px;left:1600px;transform:scale(1,1.05);transform-origin:0 23.60px;">Кнопка выбора подарка</div></body></html>
